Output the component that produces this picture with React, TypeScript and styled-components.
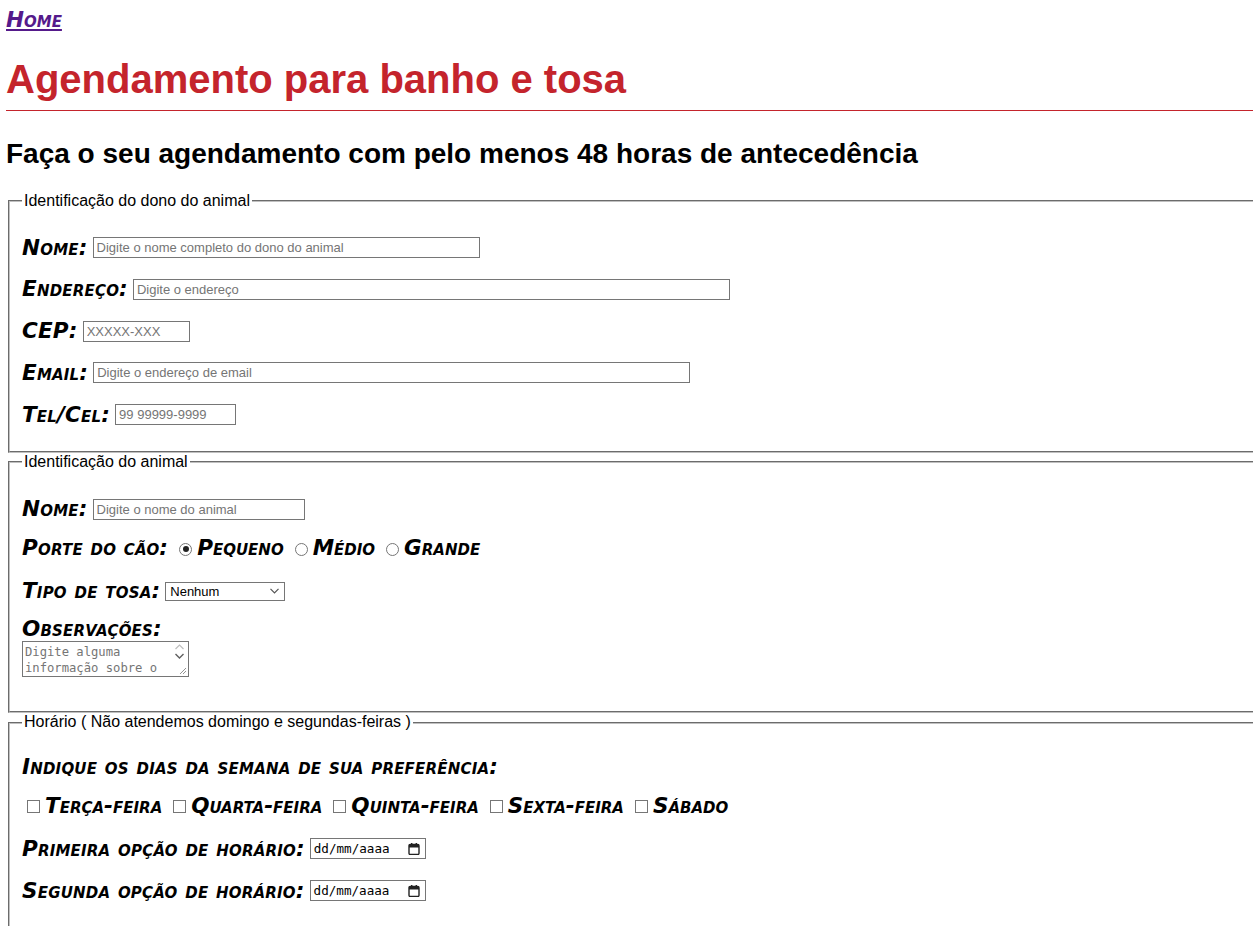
import React from "react";
import styled, { createGlobalStyle } from "styled-components";

const Global = createGlobalStyle`
  html, body { margin: 0; padding: 0; overflow: hidden; background: #fff; }
  body { font-family: "Liberation Sans", Arial, sans-serif; font-size: 16px; color: #000; }
`;

const Page = styled.div`
  width: 1300px;
  padding: 8px 0 40px 6px;
`;

const Nav = styled.nav`
  display: flex;
  height: 24px;
  align-items: flex-start;
`;

const HomeLink = styled.a`
  font-family: "DejaVu Sans", Verdana, sans-serif;
  font-size: 21.5px;
  line-height: 24px;
  font-weight: bold;
  font-style: italic;
  font-variant: small-caps;
  color: #551a8b;
  text-decoration: underline;
  text-underline-offset: 2px;
`;

const Title = styled.h1`
  margin: 24px 0 0;
  font-size: 40px;
  line-height: 46px;
  font-weight: bold;
  color: #c4242c;
  padding-bottom: 8px;
  border-bottom: 1px solid #c4242c;
`;

const Subtitle = styled.h2`
  margin: 27px 0 0;
  font-size: 28px;
  line-height: 32px;
  font-weight: bold;
  color: #000;
`;

const Fieldset = styled.fieldset<{ $mt?: number }>`
  margin: ${(p) => p.$mt ?? 0}px 2px 0;
  padding: 5.6px 12px 10px;
  border: 2px groove rgb(192, 192, 192);
  min-width: 0;
`;

const Legend = styled.legend`
  padding: 0 2px;
  font-size: 16px;
  line-height: 18.4px;
`;

const Row = styled.div<{ $mt: number; $mb?: number }>`
  display: flex;
  align-items: center;
  height: 21px;
  margin-top: ${(p) => p.$mt}px;
  margin-bottom: ${(p) => p.$mb ?? 0}px;
  white-space: nowrap;
`;

const labelFont = `
  font-family: "DejaVu Sans", Verdana, sans-serif;
  font-size: 21.5px;
  line-height: 24px;
  font-weight: bold;
  font-style: italic;
  font-variant: small-caps;
`;

const Label = styled.label`
  ${labelFont}
  letter-spacing: 0.2px;
  margin-right: 5px;
`;

const OptionLabel = styled.label`
  ${labelFont}
  margin-right: 0;
`;

const TextInput = styled.input<{ $w: number }>`
  box-sizing: border-box;
  width: ${(p) => p.$w}px;
  height: 21px;
  margin: 0;
  padding: 1px 3px;
  border: 1px solid #767676;
  border-radius: 0;
  font-family: "Liberation Sans", Arial, sans-serif;
  font-size: 13px;
  &::placeholder { color: #757575; }
`;

const Radio = styled.input<{ $first?: boolean }>`
  appearance: none;
  box-sizing: border-box;
  flex: none;
  width: 13px;
  height: 13px;
  margin: 2px 5px 0 ${(p) => (p.$first ? 6 : 11)}px;
  border: 1px solid #767676;
  border-radius: 50%;
  background: #fff;
  position: relative;
  &:checked::after {
    content: "";
    position: absolute;
    left: 2.5px;
    top: 2.5px;
    width: 6px;
    height: 6px;
    border-radius: 50%;
    background: #222;
  }
`;

const Check = styled.input<{ $first?: boolean }>`
  appearance: none;
  box-sizing: border-box;
  flex: none;
  width: 13px;
  height: 13px;
  margin: 2px 5px 0 ${(p) => (p.$first ? 5 : 11)}px;
  border: 1px solid #767676;
  border-radius: 0;
  background: #fff;
`;

const SelectWrap = styled.span`
  position: relative;
  display: inline-flex;
`;

const Select = styled.select`
  appearance: none;
  box-sizing: border-box;
  width: 120px;
  height: 19px;
  margin: 0;
  padding: 0 18px 0 4px;
  border: 1px solid #767676;
  border-radius: 0;
  background: #fff;
  color: #000;
  font-family: "Liberation Sans", Arial, sans-serif;
  font-size: 13px;
`;

const Chevron = styled.svg`
  position: absolute;
  right: 6px;
  top: 6px;
  pointer-events: none;
`;

const Block = styled.div<{ $mt: number; $mb: number }>`
  margin-top: ${(p) => p.$mt}px;
  margin-bottom: ${(p) => p.$mb}px;
`;

const BlockLabel = styled.label`
  ${labelFont}
  letter-spacing: 0.2px;
  height: 21px;
  display: flex;
  align-items: center;
`;

const AreaWrap = styled.div`
  position: relative;
  width: 167px;
  height: 36px;
  margin-top: 1.5px;
`;

const TextArea = styled.textarea`
  display: block;
  box-sizing: border-box;
  width: 167px;
  height: 36px;
  margin: 0;
  padding: 2px 19px 2px 2px;
  border: 1px solid #767676;
  border-radius: 0;
  resize: none;
  overflow: hidden;
  font-family: "DejaVu Sans Mono", "Liberation Mono", monospace;
  font-size: 12.2px;
  line-height: 16px;
  &::placeholder { color: #757575; }
`;

const ScrollBar = styled.div`
  position: absolute;
  top: 1px;
  right: 1px;
  bottom: 1px;
  width: 17px;
  background: #fff;
  pointer-events: none;
`;

const DateBox = styled.span<{ $w: number }>`
  box-sizing: border-box;
  display: inline-flex;
  align-items: center;
  justify-content: space-between;
  width: ${(p) => p.$w}px;
  height: 21px;
  padding: 0 5px 0 3px;
  border: 1px solid #767676;
  background: #fff;
  font-family: "DejaVu Sans Mono", "Liberation Mono", monospace;
  font-size: 12.6px;
  color: #000;
`;

const CalendarIcon = () => (
  <svg width="12" height="12" viewBox="0 0 12 12" aria-hidden="true">
    <rect x="1" y="1.5" width="10" height="10" rx="1.2" fill="none" stroke="#222" strokeWidth="1.4" />
    <rect x="1" y="1.5" width="10" height="3" fill="#222" />
    <rect x="3" y="0" width="1.4" height="2.5" fill="#222" />
    <rect x="7.6" y="0" width="1.4" height="2.5" fill="#222" />
  </svg>
);

const dias = ["Terça-feira", "Quarta-feira", "Quinta-feira", "Sexta-feira", "Sábado"];
const portes = ["Pequeno", "Médio", "Grande"];

export default function App() {
  return (
    <Page>
      <Global />
      <Nav>
        <HomeLink href="#">Home</HomeLink>
      </Nav>
      <Title>Agendamento para banho e tosa</Title>
      <Subtitle>Faça o seu agendamento com pelo menos 48 horas de antecedência</Subtitle>

      <Fieldset $mt={22}>
        <Legend>Identificação do dono do animal</Legend>
        <Row $mt={21.2}>
          <Label>Nome:</Label>
          <TextInput $w={387} placeholder="Digite o nome completo do dono do animal" />
        </Row>
        <Row $mt={20.75}>
          <Label>Endereço:</Label>
          <TextInput $w={597} placeholder="Digite o endereço" />
        </Row>
        <Row $mt={20.75}>
          <Label>CEP:</Label>
          <TextInput $w={107} placeholder="XXXXX-XXX" />
        </Row>
        <Row $mt={20.75}>
          <Label>Email:</Label>
          <TextInput $w={597} placeholder="Digite o endereço de email" />
        </Row>
        <Row $mt={20.75} $mb={16}>
          <Label>Tel/Cel:</Label>
          <TextInput $w={121} placeholder="99 99999-9999" />
        </Row>
      </Fieldset>

      <Fieldset>
        <Legend>Identificação do animal</Legend>
        <Row $mt={21.8}>
          <Label>Nome:</Label>
          <TextInput $w={212} placeholder="Digite o nome do animal" />
        </Row>
        <Row $mt={18}>
          <Label>Porte do cão:</Label>
          {portes.map((p, i) => (
            <React.Fragment key={p}>
              <Radio type="radio" name="porte" $first={i === 0} defaultChecked={i === 0} />
              <OptionLabel>{p}</OptionLabel>
            </React.Fragment>
          ))}
        </Row>
        <Row $mt={22}>
          <Label>Tipo de tosa:</Label>
          <SelectWrap>
            <Select defaultValue="Nenhum">
              <option>Nenhum</option>
              <option>Higiênica</option>
              <option>Tosa completa</option>
            </Select>
            <Chevron width="9" height="6" viewBox="0 0 9 6" aria-hidden="true">
              <polyline points="0.5,0.8 4.5,4.8 8.5,0.8" fill="none" stroke="#555" strokeWidth="1.2" />
            </Chevron>
          </SelectWrap>
        </Row>
        <Block $mt={17} $mb={24}>
          <BlockLabel>Observações:</BlockLabel>
          <AreaWrap>
            <TextArea placeholder="Digite alguma informação sobre o animal" />
            <ScrollBar>
              <svg width="17" height="34" viewBox="0 0 17 34" aria-hidden="true">
                <polyline points="4.5,7 8.5,3 12.5,7" fill="none" stroke="#bdbdbd" strokeWidth="1.2" />
                <polyline points="4.5,12 8.5,16 12.5,12" fill="none" stroke="#606060" strokeWidth="1.4" />
                <line x1="9" y1="32" x2="15" y2="26" stroke="#888" strokeWidth="0.9" />
                <line x1="12" y1="32" x2="15" y2="29" stroke="#888" strokeWidth="0.9" />
              </svg>
            </ScrollBar>
          </AreaWrap>
        </Block>
      </Fieldset>

      <Fieldset>
        <Legend>Horário ( Não atendemos domingo e segundas-feiras )</Legend>
        <Row $mt={19}>
          <Label>Indique os dias da semana de sua preferência:</Label>
        </Row>
        <Row $mt={18}>
          {dias.map((d, i) => (
            <React.Fragment key={d}>
              <Check type="checkbox" $first={i === 0} />
              <OptionLabel>{d}</OptionLabel>
            </React.Fragment>
          ))}
        </Row>
        <Row $mt={22}>
          <Label>Primeira opção de horário:</Label>
          <DateBox $w={116}>
            dd/mm/aaaa
            <CalendarIcon />
          </DateBox>
        </Row>
        <Row $mt={21} $mb={40}>
          <Label>Segunda opção de horário:</Label>
          <DateBox $w={116}>
            dd/mm/aaaa
            <CalendarIcon />
          </DateBox>
        </Row>
      </Fieldset>
    </Page>
  );
}
